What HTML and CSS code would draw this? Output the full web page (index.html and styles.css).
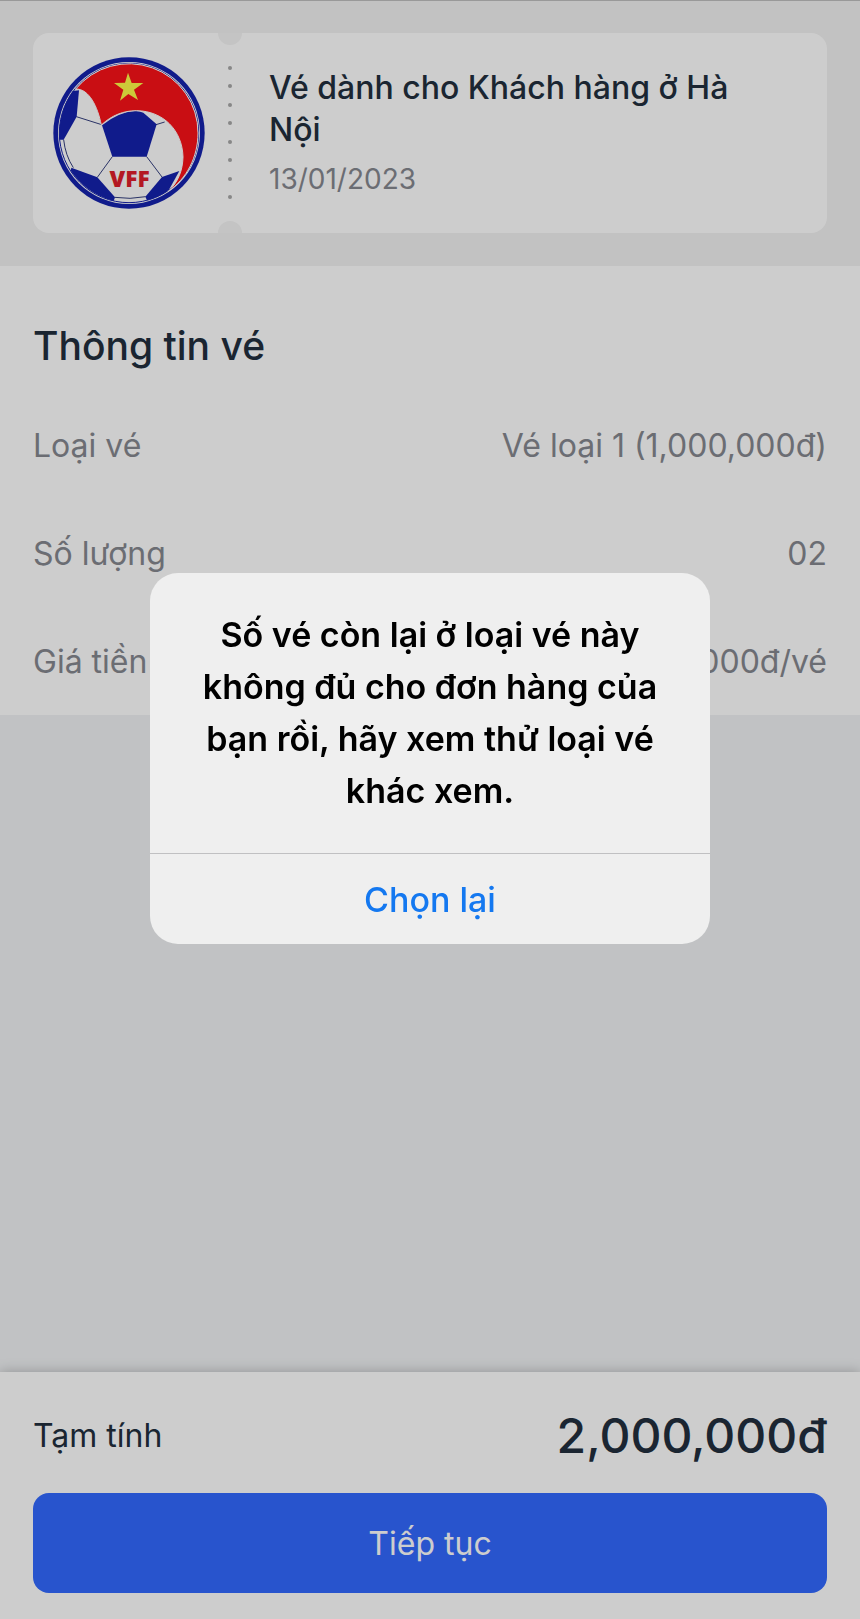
FILE: index.html
```html
<!DOCTYPE html>
<html lang="vi">
<head>
    <meta charset="UTF-8">
    <meta name="viewport" content="width=device-width, initial-scale=1">
    <title>Thông tin vé</title>
    <link rel="stylesheet" href="styles.css">
</head>
<body>
    <header class="top">
        <div class="ticket">
            <div class="ticket-logo">
                <svg class="logo" viewBox="99 170 456 456" role="img" aria-label="VFF">
                    <circle cx="327" cy="398" r="227" fill="#1522ad"/>
                    <circle cx="327" cy="398" r="213" fill="#fff"/>
                    <circle cx="327" cy="398" r="209" fill="#fff" stroke="#1522ad" stroke-width="3"/>
                    <!-- ball seams -->
                    <g fill="none" stroke="#35407f" stroke-width="3">
                        <path d="M169 349L245 373"/>
                        <path d="M408 373L434 365"/>
                        <path d="M277 469L232 531"/>
                        <path d="M380 469L426 530"/>
                        <path d="M131 418Q136 465 160 502"/>
                        <path d="M284 591Q330 598 377 589"/>
                    </g>
                    <!-- blue panels -->
                    <g fill="#1522ad">
                        <path d="M246 375Q295 335 345 332Q360 332 370 337L410 372L380 469H277Z"/>
                        <path d="M158 272L177 270L170 349L131 418H118Q114 335 158 272Z"/>
                        <path d="M154 502L232 531L285 591L281 602Q200 580 152 511Z"/>
                        <path d="M478 512L426 530L376 589L381 600Q420 590 447 568Z"/>
                    </g>
                    <!-- red swoosh -->
                    <path d="M167 266A207 207 0 0 1 534 398C534 470 500 535 445 573C475 545 488 510 489 470C487 390 430 332 350 331C310 331 275 345 244 374C233 320 208 265 167 266Z" fill="#fa1218" stroke="#fff" stroke-width="3" stroke-linejoin="round"/>
                    <path d="M324 217L335 248H370L342 268L354 299L325 281L300 301L310 268L282 248L315 247Z" fill="#fffa48"/>
                    <text class="logo-text" x="329" y="560" text-anchor="middle">VFF</text>
                </svg>
            </div>
            <div class="ticket-divider">
                <i></i><i></i><i></i><i></i><i></i><i></i><i></i><i></i>
            </div>
            <div class="ticket-info">
                <h1>Vé dành cho Khách hàng ở Hà Nội</h1>
                <time datetime="2023-01-13">13/01/2023</time>
            </div>
        </div>
    </header>

    <main class="details">
        <h2>Thông tin vé</h2>
        <dl class="rows">
            <div class="row">
                <dt>Loại vé</dt>
                <dd>Vé loại 1 (1,000,000đ)</dd>
            </div>
            <div class="row">
                <dt>Số lượng</dt>
                <dd>02</dd>
            </div>
            <div class="row">
                <dt>Giá tiền</dt>
                <dd>1,000,000đ/vé</dd>
            </div>
        </dl>
    </main>

    <footer class="checkout">
        <div class="total">
            <span>Tạm tính</span>
            <strong>2,000,000đ</strong>
        </div>
        <button type="button" class="continue">Tiếp tục</button>
    </footer>

    <div class="overlay">
        <div class="alert" role="alertdialog" aria-modal="true" aria-labelledby="alert-message">
            <p id="alert-message">Số vé còn lại ở loại vé này không đủ cho đơn hàng của bạn rồi, hãy xem thử loại vé khác xem.</p>
            <button type="button" class="alert-action">Chọn lại</button>
        </div>
    </div>
</body>
</html>
```
FILE: styles.css
```css
* {
    box-sizing: border-box;
}
body {
    margin: 0;
    min-height: 100vh;
    display: flex;
    flex-direction: column;
    font-family: Inter, "Noto Sans", sans-serif;
    font-size: 32px;
    line-height: 40px;
    color: #222f3e;
    background-color: #f0f2f4;
}
h1, h2, p, dl, dd {
    margin: 0;
}
button {
    border: none;
    font-family: inherit;
    font-size: 32px;
    cursor: pointer;
}

/* Ticket */
.top {
    padding: 32px 33px 33px;
    border-top: 1px solid #bfbfbf;
    background-color: #f2f2f2;
}
.ticket {
    display: flex;
    min-height: 200px;
    border-radius: 16px;
    background-color: #fff;
    overflow: hidden;
}
.ticket-logo {
    padding: 24px 13px 24px 20px;
}
.logo {
    display: block;
    width: 152px;
    height: 152px;
}
.logo-text {
    font-family: "Open Sans", sans-serif;
    font-size: 68px;
    font-weight: 800;
    fill: #e01f2b;
}
.ticket-divider {
    position: relative;
    flex: none;
    width: 24px;
    padding: 33px 0 34px;
    display: flex;
    flex-direction: column;
    align-items: center;
    justify-content: space-between;
}
.ticket-divider i {
    width: 4px;
    height: 4px;
    border-radius: 50%;
    background-color: #a8a8a8;
}
/* Notches cut into the ticket edges */
.ticket-divider::before,
.ticket-divider::after {
    content: "";
    position: absolute;
    left: 0;
    width: 24px;
    height: 24px;
    border-radius: 50%;
    background-color: #f4f4f4;
}
.ticket-divider::before {
    top: -12px;
}
.ticket-divider::after {
    bottom: -12px;
}
.ticket-info {
    flex: 1;
    padding: 34px 64px 34px 27px;
}
.ticket-info h1 {
    font-size: 32px;
    font-weight: 500;
    line-height: 42px;
}
.ticket-info time {
    display: block;
    margin-top: 8px;
    font-size: 28px;
    line-height: 40px;
    color: #86888f;
}

/* Details */
.details {
    padding: 52px 33px 33px;
    background-color: #fff;
}
.details h2 {
    font-size: 39px;
    font-weight: 500;
    line-height: 56px;
}
.rows {
    display: flex;
    flex-direction: column;
    gap: 68px;
    margin-top: 52px;
    color: #86888f;
}
.row {
    display: flex;
    justify-content: space-between;
}

/* Checkout bar */
.checkout {
    margin-top: auto;
    padding: 32px 33px 26px;
    background-color: #fff;
    box-shadow: 0 0 12px rgba(0, 0, 0, 0.25);
}
.total {
    display: flex;
    align-items: center;
    justify-content: space-between;
    margin-bottom: 25px;
}
.total strong {
    font-size: 48px;
    font-weight: 500;
    line-height: 64px;
}
.continue {
    display: block;
    width: 100%;
    height: 100px;
    border-radius: 16px;
    background-color: #3269ff;
    color: #fff;
}

/* Alert */
.overlay {
    position: fixed;
    inset: 0;
    display: flex;
    align-items: center;
    justify-content: center;
    padding: 0 24px 102px;
    background-color: rgba(0, 0, 0, 0.196);
}
.alert {
    width: 100%;
    max-width: 560px;
    border-radius: 28px;
    background-color: #efefef;
    color: #000;
    text-align: center;
    overflow: hidden;
}
.alert p {
    padding: 36px 48px;
    font-size: 34px;
    font-weight: 600;
    line-height: 52px;
}
.alert-action {
    display: block;
    width: 100%;
    height: 91px;
    border-top: 1px solid #c0c0c2;
    background-color: transparent;
    color: #1478f0;
    font-size: 34px;
    font-weight: 500;
}
```
